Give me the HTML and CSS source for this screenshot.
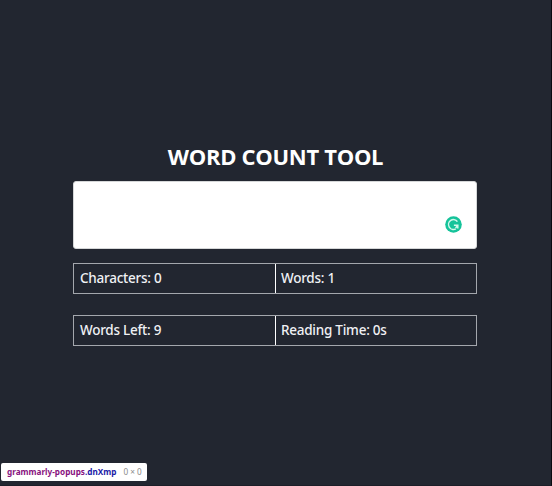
FILE: index.html
```
<!DOCTYPE html>
<html lang="en">
<head>
<meta charset="utf-8">
<title>Word Count Tool</title>
<link rel="stylesheet" href="styles.css">
</head>
<body>
<main class="tool">
  <h1 class="title">WORD COUNT TOOL</h1>
  <div class="editor">
    <textarea class="input" aria-label="Text"></textarea>
    <svg class="badge" viewBox="0 0 17 17" aria-hidden="true">
      <circle cx="8.5" cy="8.5" r="8.3" fill="#15c39a"/>
      <path d="M12.4 5.6A4.9 4.9 0 1 0 10.8 12.8M8.9 9.3H12.8V12.6M12.6 9.5L10.6 12" fill="none" stroke="#d4f8ec" stroke-width="1.5"/>
    </svg>
  </div>
  <div class="row"><div class="cell">Characters: 0</div><div class="cell">Words: 1</div></div>
  <div class="row"><div class="cell">Words Left: 9</div><div class="cell">Reading Time: 0s</div></div>
</main>
<div class="tip"><span class="tag">grammarly-popups</span><span class="cls">.dnXmp</span><span class="size">0 × 0</span></div>
</body>
</html>
```
FILE: styles.css
```
* { box-sizing: border-box; }
body {
  margin: 0;
  height: 486px;
  overflow: hidden;
  background: #222630;
  border-right: 1px solid #0a0b0f;
  border-bottom: 1px solid #1c1e28;
  color: #f0f1f4;
  font-family: "Noto Sans", "Open Sans", sans-serif;
}
.tool { width: 404px; margin: 0 0 0 73px; padding-top: 140px; }
.title {
  margin: 0 0 9px;
  height: 32px;
  padding-left: 1px;
  font-family: "Open Sans", sans-serif;
  font-size: 22px;
  line-height: 32px;
  font-weight: 700;
  letter-spacing: -0.3px;
  text-align: center;
  color: #fff;
}
.editor { position: relative; height: 68px; margin-bottom: 14px; }
.input {
  display: block;
  width: 100%;
  height: 100%;
  border: 1px solid #d5d7d8;
  border-radius: 3px;
  background: #fff;
  resize: none;
}
.badge { position: absolute; right: 15px; bottom: 16px; width: 17px; height: 17px; }
.row {
  display: grid;
  grid-template-columns: 1fr 1fr;
  height: 31px;
  margin-bottom: 21px;
  border: 1px solid #a4a7ad;
}
.cell {
  padding-left: 6px;
  font-size: 13.5px;
  line-height: 29px;
  font-weight: 500;
  letter-spacing: -0.25px;
}
.cell + .cell { padding-left: 5px; border-left: 1px solid #fff; }
.tip {
  position: absolute;
  left: 1px;
  top: 463px;
  width: 146px;
  height: 18px;
  padding-left: 6px;
  border-radius: 2px;
  background: #fff;
  font-size: 8.2px;
  line-height: 18px;
  white-space: nowrap;
}
.tag, .cls { font-weight: 700; }
.tag { color: #881280; }
.cls { color: #1a1aa6; }
.size { margin-left: 7px; color: #8b8b8b; }
```
